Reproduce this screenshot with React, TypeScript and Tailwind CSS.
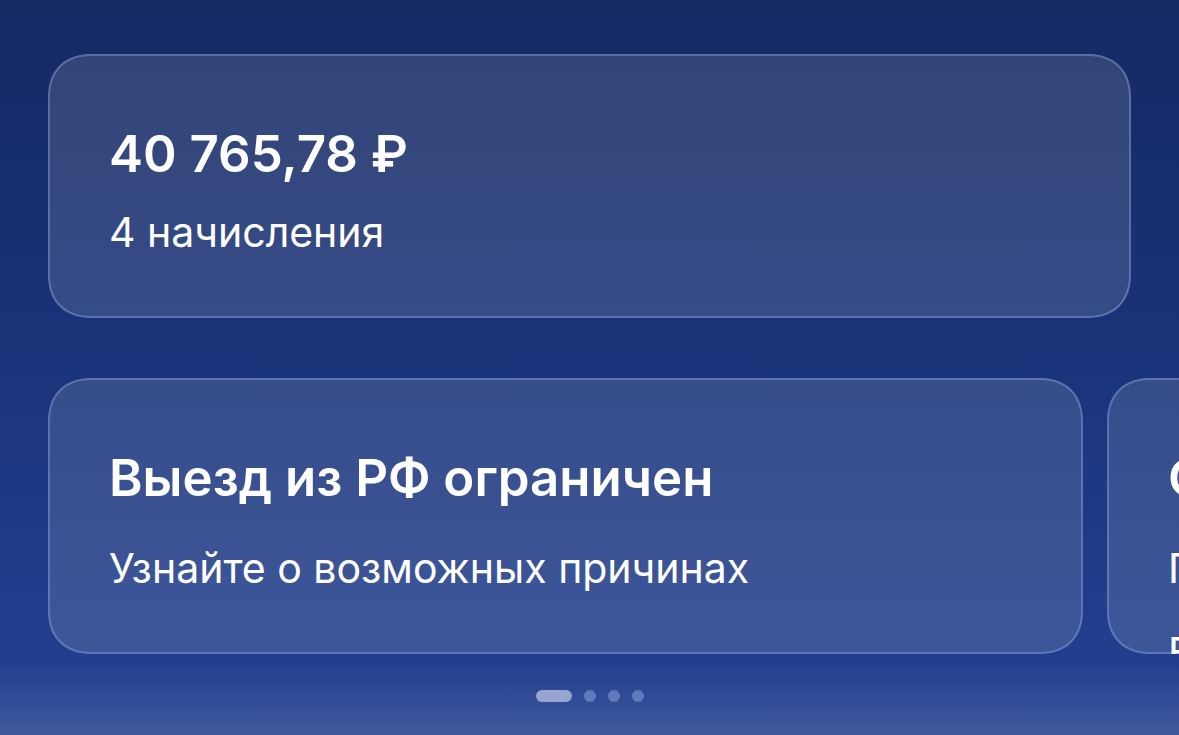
interface Notice {
  title: string;
  text: string;
  note?: string;
}

const notices: Notice[] = [
  { title: "Выезд из РФ ограничен", text: "Узнайте о возможных причинах" },
  { title: "С", text: "П", note: "Е" },
];

const cardClass =
  "rounded-[44px] [corner-shape:superellipse(1.2)] border-2 border-[#8c9fd8]/45 bg-[#f4fbf0]/13 px-[59px] text-white";

function ChargesCard() {
  return (
    <section className={`${cardClass} mx-12 pt-16 pb-14`}>
      <h2 className="text-[51px] leading-17 font-semibold">40 765,78 ₽</h2>
      <p className="mt-4 text-[41px] leading-14">4 начисления</p>
    </section>
  );
}

function NoticeCard({ title, text, note }: Notice) {
  return (
    <li className={`${cardClass} w-[calc(100%-48px)] shrink-0 pt-16`}>
      <h2 className="text-[51px] leading-17 font-semibold">{title}</h2>
      <p className="mt-7 text-[41px] leading-14">{text}</p>
      {note && <p className="mt-7 text-[41px] leading-14">{note}</p>}
    </li>
  );
}

function Pager({ count }: { count: number }) {
  return (
    <nav className="flex justify-center gap-3" aria-label="Слайды">
      {Array.from({ length: count }, (_, i) => (
        <button
          key={i}
          type="button"
          aria-label={`Слайд ${i + 1}`}
          className={
            i === 0
              ? "h-3 w-9 rounded-full bg-[#98a5d0]"
              : "h-3 w-3 rounded-full bg-[#617bb9]"
          }
        />
      ))}
    </nav>
  );
}

export default function App() {
  return (
    <main className="min-h-screen overflow-hidden bg-[linear-gradient(to_bottom,#152963_0%,#1a347b_50%,#223f8f_90%,#3f5a9d_100%)] pt-[54px] pb-8 font-['Inter','Liberation_Sans',sans-serif]">
      <ChargesCard />
      <ul className="mt-15 flex h-69 gap-6 overflow-hidden px-12">
        {notices.map((notice) => (
          <NoticeCard key={notice.title} {...notice} />
        ))}
      </ul>
      <div className="mt-9">
        <Pager count={4} />
      </div>
    </main>
  );
}
